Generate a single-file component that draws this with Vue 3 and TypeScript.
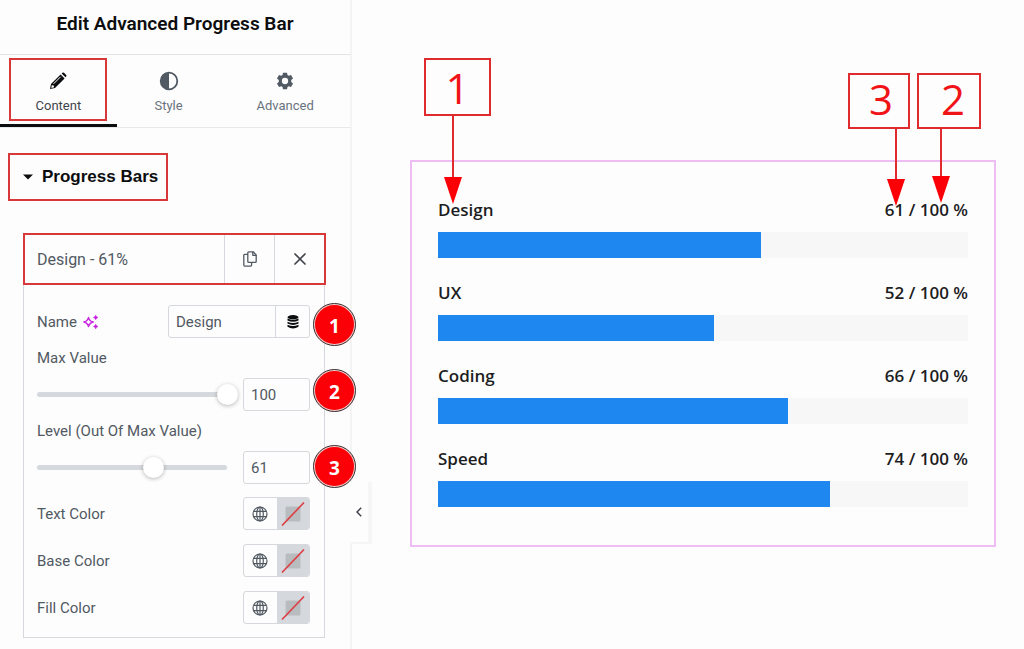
<script setup lang="ts">
import { ref } from 'vue'

interface Bar {
  name: string
  value: number
  max: number
}

interface ColorControl {
  id: string
  label: string
}

const bars: Bar[] = [
  { name: 'Design', value: 61, max: 100 },
  { name: 'UX', value: 52, max: 100 },
  { name: 'Coding', value: 66, max: 100 },
  { name: 'Speed', value: 74, max: 100 },
]

const colorControls: ColorControl[] = [
  { id: 'text', label: 'Text Color' },
  { id: 'base', label: 'Base Color' },
  { id: 'fill', label: 'Fill Color' },
]

const name = ref('Design')
const maxValue = ref(100)
const level = ref(61)
</script>

<template>
  <div class="editor">
    <aside class="panel">
      <header class="panel-header">
        <h1>Edit Advanced Progress Bar</h1>
      </header>

      <nav class="tabs">
        <button class="tab active" type="button">
          <svg width="18" height="18" viewBox="0 0 18 18" aria-hidden="true">
            <path d="M1 17l1-5L11.600 2.400l4 4L6 16z" fill="#0c0d0e" />
            <path d="M12.600 1.400l.8-.7q.8-.6 1.600 0l2.200 2.200q.7.800 0 1.600l-.7.800z" fill="#0c0d0e" />
            <path d="M4.600 11.800l7-7" stroke="#fff" stroke-width="1" />
            <path d="M2.700 13.200l2 .3.400 1.800-2.700.6z" fill="#fff" />
          </svg>
          <span>Content</span>
        </button>
        <button class="tab" type="button">
          <svg width="20" height="20" viewBox="0 0 20 20" aria-hidden="true">
            <circle cx="10" cy="10" r="8.300" fill="none" stroke="#515962" stroke-width="1.800" />
            <path d="M10 1.700a8.300 8.300 0 0 0 0 16.600z" fill="#515962" />
          </svg>
          <span>Style</span>
        </button>
        <button class="tab" type="button">
          <svg width="18" height="18" viewBox="0 0 24 24" aria-hidden="true">
            <path
              fill="#515962"
              fill-rule="evenodd"
              d="M9.300 1h5.400l.6 3.100 1.700 1 3-1.100 2.700 4.700-2.400 2.100v2.400l2.400 2.100-2.700 4.700-3-1.100-1.700 1-.6 3.100H9.300l-.6-3.100-1.700-1-3 1.100-2.700-4.700 2.400-2.100v-2.400L1.300 8.700 4 4l3 1.100 1.700-1zM12 7.800a4.200 4.200 0 1 0 0 8.400A4.200 4.200 0 0 0 12 7.800z"
            />
          </svg>
          <span>Advanced</span>
        </button>
      </nav>

      <button class="section-toggle" type="button">
        <svg width="10" height="6" viewBox="0 0 10 6" aria-hidden="true">
          <path d="M0 .5h10L5 5.500z" fill="#0c0d0e" />
        </svg>
        Progress Bars
      </button>

      <section class="item">
        <div class="item-head">
          <button class="item-title" type="button">Design - 61%</button>
          <button class="item-tool" type="button" aria-label="Duplicate">
            <svg width="14" height="16" viewBox="0 0 14 16" fill="none" stroke="#515962" stroke-width="1.300" stroke-linejoin="round" aria-hidden="true">
              <path d="M5.800.8h4.400L13.200 4v6.400q0 1-1 1H5.800q-1 0-1-1V1.800q0-1 1-1z" />
              <path d="M9.800.8v3.500h3.400" />
              <path d="M4.800 3.300h-3q-1 0-1 1v9.800q0 1 1 1h5.800q1 0 1-1v-2.700" />
            </svg>
          </button>
          <button class="item-tool" type="button" aria-label="Remove">
            <svg width="12" height="12" viewBox="0 0 12 12" stroke="#3f444b" stroke-width="1.700" stroke-linecap="round" aria-hidden="true">
              <path d="M1 1l10 10M11 1L1 11" />
            </svg>
          </button>
        </div>

        <div class="item-body">
          <div class="field">
            <label for="name">Name</label>
            <svg class="sparkle" width="16" height="14" viewBox="0 0 16 14" aria-hidden="true">
              <path d="M5.500 2.300Q6.300 6.200 10.300 7 6.300 7.800 5.500 11.700 4.700 7.800.8 7 4.700 6.200 5.500 2.300z" fill="none" stroke="#c71fe0" stroke-width="1.300" stroke-linejoin="round" />
              <path d="M12.700.2q.4 1.900 2.300 2.300-1.900.4-2.300 2.300-.4-1.900-2.300-2.300 1.900-.4 2.300-2.300zM12.700 9.200q.4 1.900 2.300 2.300-1.900.4-2.300 2.300-.4-1.900-2.300-2.300 1.900-.4 2.300-2.300z" fill="#c71fe0" stroke="#c71fe0" stroke-width=".6" />
            </svg>
            <div class="name-group">
              <input id="name" v-model="name" type="text" />
              <button type="button" aria-label="Dynamic tags">
                <svg width="12" height="14" viewBox="0 0 12 14" fill="#0c0d0e" aria-hidden="true">
                  <ellipse cx="6" cy="2.200" rx="5.500" ry="2.200" />
                  <path d="M.5 3.600q5.500 2.600 11 0v1.900q-5.500 2.600-11 0z" />
                  <path d="M.5 6.700q5.500 2.600 11 0v1.900q-5.500 2.600-11 0z" />
                  <path d="M.5 9.800q5.500 2.600 11 0v1.900q-5.500 3.600-11 0z" />
                </svg>
              </button>
            </div>
            <span class="badge low">1</span>
          </div>

          <label class="line-label" for="max">Max Value</label>
          <div class="field">
            <div class="slider">
              <input v-model.number="maxValue" type="range" min="0" max="100" aria-label="Max Value slider" />
            </div>
            <input id="max" v-model="maxValue" class="number" type="text" />
            <span class="badge high">2</span>
          </div>

          <label class="line-label" for="level">Level (Out Of Max Value)</label>
          <div class="field">
            <div class="slider">
              <input v-model.number="level" type="range" min="0" max="100" aria-label="Level slider" />
            </div>
            <input id="level" v-model="level" class="number" type="text" />
            <span class="badge">3</span>
          </div>

          <div class="colors">
            <div v-for="control in colorControls" :key="control.id" class="field">
              <span :id="`color-${control.id}`">{{ control.label }}</span>
              <div class="color-group" role="group" :aria-labelledby="`color-${control.id}`">
                <button type="button" aria-label="Global colors">
                  <svg width="16" height="16" viewBox="0 0 16 16" fill="none" stroke="#515962" stroke-width="1.200" aria-hidden="true">
                    <circle cx="8" cy="8" r="7" />
                    <ellipse cx="8" cy="8" rx="3.300" ry="7" />
                    <path d="M8 1v14M1.800 5.300h12.400M1.800 10.700h12.400" />
                  </svg>
                </button>
                <button class="swatch" type="button" aria-label="Pick color">
                  <svg width="24" height="24" viewBox="0 0 24 24" aria-hidden="true">
                    <rect x="4.500" y="4.500" width="15" height="15" rx="1.500" fill="#b9bcbf" />
                    <path d="M1 23.500L23 .5" stroke="#dc3e44" stroke-width="1.600" />
                  </svg>
                </button>
              </div>
            </div>
          </div>
        </div>
      </section>

      <button class="collapse" type="button" aria-label="Hide panel">
        <svg width="6" height="10" viewBox="0 0 6 10" fill="none" stroke="#3f444b" stroke-width="1.500" aria-hidden="true">
          <path d="M5.200.8L1 5l4.200 4.200" />
        </svg>
      </button>
    </aside>

    <main class="preview">
      <section class="widget">
        <div v-for="bar in bars" :key="bar.name" class="bar">
          <div class="bar-head">
            <span>{{ bar.name }}</span>
            <span>{{ bar.value }} / {{ bar.max }} %</span>
          </div>
          <div class="track">
            <div class="fill" :style="{ width: (bar.value / bar.max) * 100 + '%' }"></div>
          </div>
        </div>

        <div class="callout name-callout">
          <span>1</span>
          <svg width="18" height="90" viewBox="0 0 18 90" aria-hidden="true">
            <path d="M9 0v64" stroke="#df2b2e" stroke-width="2" />
            <path d="M0 63h18L9 90z" fill="#fb0007" />
          </svg>
        </div>
        <div class="callout level-callout">
          <span>3</span>
          <svg width="18" height="77" viewBox="0 0 18 77" aria-hidden="true">
            <path d="M9 0v52" stroke="#df2b2e" stroke-width="2" />
            <path d="M0 50h18L9 77z" fill="#fb0007" />
          </svg>
        </div>
        <div class="callout max-callout">
          <span>2</span>
          <svg width="18" height="74" viewBox="0 0 18 74" aria-hidden="true">
            <path d="M9 0v48" stroke="#df2b2e" stroke-width="2" />
            <path d="M0 47h18L9 74z" fill="#fb0007" />
          </svg>
        </div>
      </section>
    </main>
  </div>
</template>

<style>
body {
  background: #fdfdfd;
}
</style>

<style scoped>
.editor {
  display: flex;
  min-height: 100vh;
  background: #fdfdfd;
  color: #515962;
  font-family: Roboto, "Liberation Sans", sans-serif;
  font-size: 15px;
}

.editor *,
.editor *::before {
  box-sizing: border-box;
}

button,
input {
  margin: 0;
  padding: 0;
  border: 0;
  background: none;
  color: inherit;
  font: inherit;
}

button {
  display: flex;
  align-items: center;
  justify-content: center;
}

.panel {
  position: relative;
  flex: 0 0 352px;
  border-right: 2px solid #f4f4f5;
}

.panel-header {
  display: flex;
  align-items: center;
  justify-content: center;
  height: 55px;
  padding-bottom: 6px;
  border-bottom: 1px solid #e2e3e5;
}

h1 {
  margin: 0;
  color: #0c0d0e;
  font-size: 19px;
  font-weight: 600;
  line-height: 24px;
}

.tabs {
  display: grid;
  grid-template-columns: 9fr 8fr 10fr;
  height: 73px;
  border-bottom: 1px solid #e6e8ea;
}

.tab {
  flex-direction: column;
  gap: 6px;
  padding-top: 7px;
  border-bottom: 3px solid transparent;
  color: #69727d;
  font-size: 13px;
  line-height: 18px;
}

.tab svg {
  height: 20px;
}

.tab.active {
  position: relative;
  border-bottom-color: #0c0d0e;
  color: #3f444b;
}

.tab.active::before {
  content: "";
  position: absolute;
  inset: 3px 10px 3px 9px;
  border: 2px solid #d9383a;
}

.section-toggle {
  gap: 9px;
  height: 48px;
  margin: 25px 0 0 8px;
  padding: 0 8px 0 13px;
  border: 2px solid #d9383a;
  color: #0c0d0e;
  font-family: "Liberation Sans", Arial, sans-serif;
  font-size: 17px;
  font-weight: 700;
}

.item {
  margin: 32px 24px 12px 23px;
}

.item-head {
  display: flex;
  height: 52px;
  border: 2px solid #d9383a;
}

.item-title {
  flex: 1;
  justify-content: flex-start;
  padding-left: 12px;
  font-size: 16px;
}

.item-tool {
  width: 50px;
  border-left: 1px solid #d5d8dc;
}

.item-body {
  display: flex;
  flex-direction: column;
  gap: 10px;
  margin-right: 1px;
  padding: 20px 14px 13px 13px;
  border: 1px solid #d5d8dc;
  border-top: 0;
}

.field {
  position: relative;
  display: flex;
  align-items: center;
  height: 33px;
}

.line-label {
  line-height: 20px;
}

.sparkle {
  margin-left: 6px;
}

.name-group,
.color-group {
  display: flex;
  height: 33px;
  margin-left: auto;
  border: 1px solid #d5d8dc;
  border-radius: 3px;
  overflow: hidden;
}

.name-group {
  width: 142px;
}

.name-group input {
  flex: 1;
  min-width: 0;
  padding-left: 7px;
}

.name-group button {
  width: 34px;
  border-left: 1px solid #d5d8dc;
}

.slider {
  position: relative;
  display: flex;
  flex: 1;
  align-items: center;
  margin-right: 16px;
}

.slider::before {
  content: "";
  position: absolute;
  inset: 8px 0;
  border-radius: 3px;
  background: #d5d8dc;
}

.slider input {
  position: relative;
  flex: 1;
  height: 21px;
  margin: 0 -11px;
  appearance: none;
}

.slider input::-webkit-slider-thumb {
  width: 21px;
  height: 21px;
  border-radius: 50%;
  background: #fff;
  box-shadow: 0 1px 4px rgba(0, 0, 0, 0.28);
  appearance: none;
}

.number {
  width: 67px;
  height: 33px;
  padding-left: 7px;
  border: 1px solid #d5d8dc;
  border-radius: 3px;
}

.badge {
  position: absolute;
  top: 50%;
  right: -46px;
  z-index: 2;
  width: 43px;
  height: 43px;
  margin-top: -23px;
  border: 2px solid #f7c9ca;
  border-radius: 50%;
  outline: 1px solid #333;
  outline-offset: -1px;
  background: #fb0007;
  color: #fff;
  font-family: "Open Sans", "Noto Sans", sans-serif;
  font-size: 19px;
  font-weight: 700;
  line-height: 42px;
  text-align: center;
}

.badge.low {
  margin-top: -19px;
}

.badge.high {
  margin-top: -26px;
}

.colors {
  display: flex;
  flex-direction: column;
  gap: 14px;
  margin-top: 3px;
}

.color-group {
  width: 67px;
}

.color-group button {
  flex: 1;
}

.color-group .swatch {
  background: #d5d8dc;
}

.collapse {
  position: absolute;
  top: 482px;
  right: -22px;
  width: 22px;
  height: 62px;
  border-right: 4px solid #f6f6f7;
  border-bottom: 2px solid #f6f6f7;
  background: #fdfdfd;
}

.preview {
  flex: 1;
  min-width: 0;
  padding: 160px 28px 40px 58px;
}

.widget {
  position: relative;
  display: flex;
  flex-direction: column;
  gap: 25px;
  padding: 38px 26px;
  border: 2px solid #edbdf4;
  color: #1d1d1f;
  font-family: "Open Sans", "Noto Sans", sans-serif;
  font-size: 17px;
  font-weight: 600;
}

.bar-head {
  display: flex;
  justify-content: space-between;
  height: 22px;
  margin-bottom: 10px;
  line-height: 20px;
}

.track {
  height: 26px;
  background: #f7f7f7;
}

.fill {
  height: 100%;
  background: #1e87f0;
}

.callout {
  position: absolute;
  height: 56px;
  border: 2px solid #df2b2e;
  color: #f01418;
  font-size: 42px;
  font-weight: 400;
  line-height: 48px;
  text-align: center;
}

.callout svg {
  position: absolute;
  top: 54px;
}

.name-callout {
  top: -104px;
  left: 12px;
  width: 67px;
  height: 58px;
  line-height: 56px;
}

.name-callout svg {
  left: 18px;
}

.level-callout {
  top: -89px;
  right: 84px;
  width: 62px;
  padding-left: 4px;
}

.level-callout svg {
  right: 3px;
}

.max-callout {
  top: -89px;
  right: 13px;
  width: 64px;
  padding-left: 8px;
}

.max-callout svg {
  left: 13px;
}
</style>
